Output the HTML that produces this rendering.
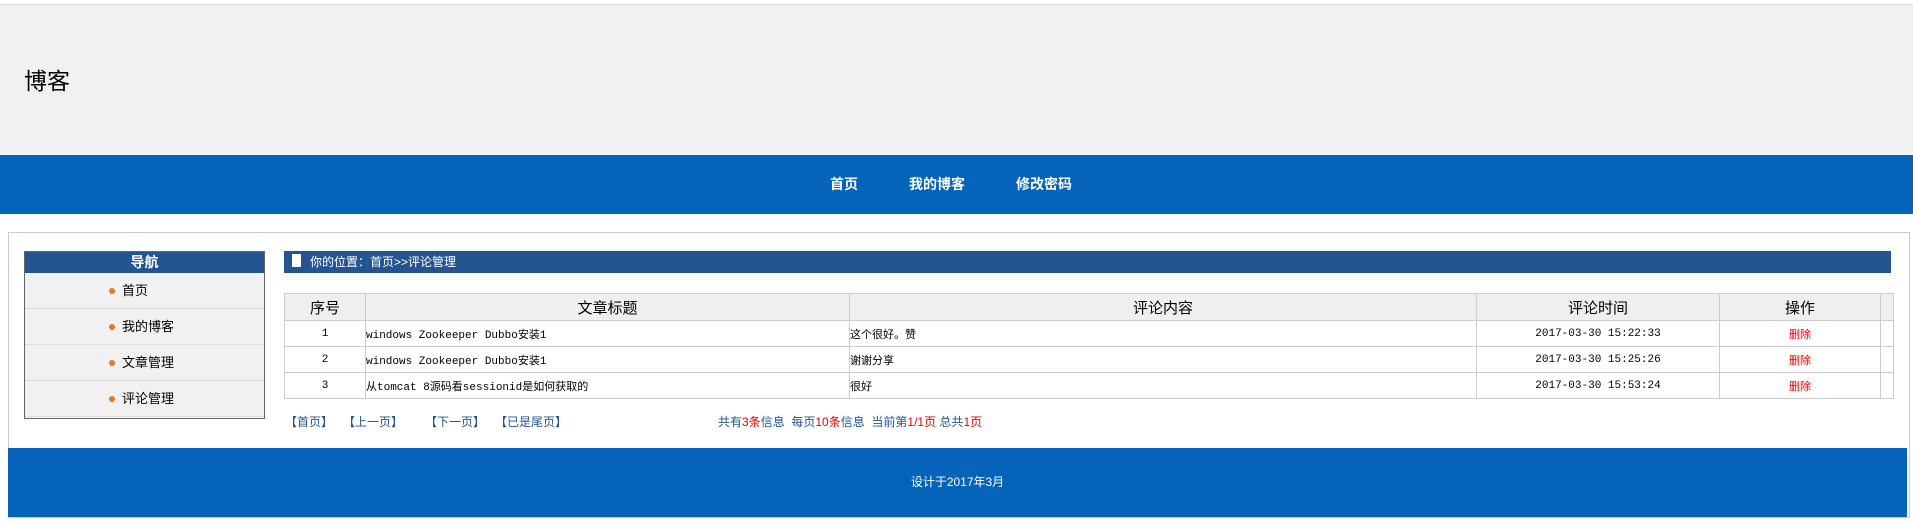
<!DOCTYPE html>
<html><head><meta charset="utf-8"><style>
*{margin:0;padding:0;box-sizing:border-box}
body{width:1913px;height:524px;background:#fff;position:relative;overflow:hidden;font-family:"Liberation Sans","Noto Sans CJK SC",sans-serif;font-size:12px;color:#000}
.a{position:absolute}
#top{left:0;top:4px;width:1913px;height:151px;background:#f1f1f1;border-top:1px solid #ddd}
#nav{left:0;top:155px;width:1913px;height:59px;background:#0563b9}
#nav span{position:absolute;top:19px;color:#fff;font-weight:bold;font-size:14px}
#box{left:8px;top:232px;width:1902px;height:286px;border:1px solid #ccc}
#side{left:24px;top:251px;width:241px;height:168px;border:1px solid #666;background:#f1f1f1}
#side .h{height:21px;background:#245590;color:#fff;font-weight:bold;text-align:center;font-size:14px;line-height:21px}
#side .i{height:36px;line-height:36px;border-bottom:1px dotted #ccc;padding-left:97px;font-size:13px;position:relative}
#side .i:before{content:"";position:absolute;left:84px;top:15px;width:6px;height:6px;border-radius:50%;background:#e87722}
#bc{left:284px;top:251px;width:1607px;height:22px;background:#245590;color:#fff;font-size:12px;line-height:22px;padding-left:26px}
#bc:before{content:"";position:absolute;left:8px;top:3px;width:9px;height:13px;background:#fff}
table{position:absolute;left:284px;top:293px;width:1610px;border-collapse:collapse;font-family:"Liberation Mono","Noto Sans CJK SC",monospace;font-size:11px}
td,th{border:1px solid #ccc;height:26px;padding:0}
th{background:#efefef;font-weight:normal;font-size:15px;height:27px;font-family:"Liberation Sans","Noto Sans CJK SC",sans-serif}
td.c{text-align:center}
.r{color:#e00}
.pg{top:413px;color:#245590;font-size:12px}
#foot{left:8px;top:448px;width:1899px;height:69px;background:#0563b9;color:#fff;text-align:center;line-height:69px;font-size:12px}
</style></head><body>
<div id="top" class="a"><div class="a" style="left:24px;top:57px;font-size:23px">博客</div></div>
<div id="nav" class="a"><span style="left:830px">首页</span><span style="left:909px">我的博客</span><span style="left:1016px">修改密码</span></div>
<div id="box" class="a"></div>
<div id="side" class="a"><div class="h">导航</div><div class="i">首页</div><div class="i">我的博客</div><div class="i">文章管理</div><div class="i">评论管理</div></div>
<div id="bc" class="a">你的位置：首页&gt;&gt;评论管理</div>
<table>
<tr><th style="width:81px">序号</th><th style="width:484px">文章标题</th><th style="width:627px">评论内容</th><th style="width:243px">评论时间</th><th style="width:161px">操作</th><th></th></tr>
<tr><td class="c">1</td><td>windows Zookeeper Dubbo安装1</td><td>这个很好。赞</td><td class="c">2017-03-30 15:22:33</td><td class="c r">删除</td><td></td></tr>
<tr><td class="c">2</td><td>windows Zookeeper Dubbo安装1</td><td>谢谢分享</td><td class="c">2017-03-30 15:25:26</td><td class="c r">删除</td><td></td></tr>
<tr><td class="c">3</td><td>从tomcat 8源码看sessionid是如何获取的</td><td>很好</td><td class="c">2017-03-30 15:53:24</td><td class="c r">删除</td><td></td></tr>
</table>
<div class="a pg" style="left:285px">【首页】</div>
<div class="a pg" style="left:343px">【上一页】</div>
<div class="a pg" style="left:425px">【下一页】</div>
<div class="a pg" style="left:495px">【已是尾页】</div>
<div class="a pg" style="left:718px">共有<span class="r">3条</span>信息&nbsp; 每页<span class="r">10条</span>信息&nbsp; 当前第<span class="r">1/1页</span> 总共<span class="r">1页</span></div>
<div id="foot" class="a">设计于2017年3月</div>
</body></html>
